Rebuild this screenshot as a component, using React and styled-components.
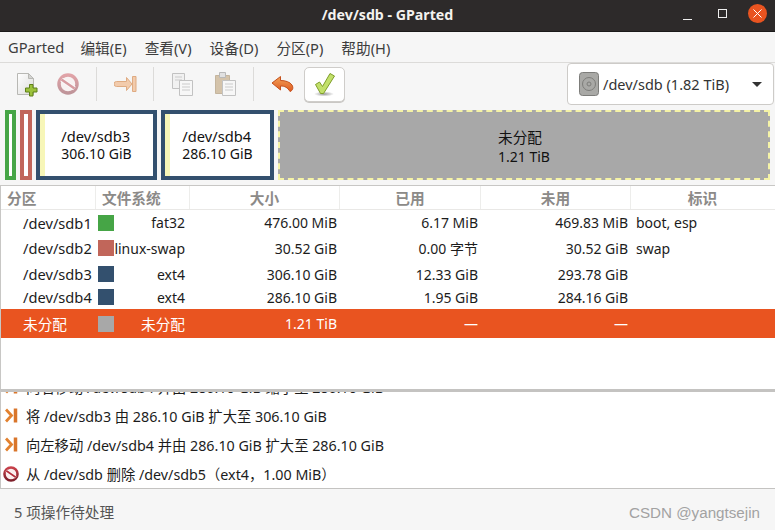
import React from "react";
import styled, { createGlobalStyle } from "styled-components";

const Global = createGlobalStyle`
  html, body { margin: 0; padding: 0; background: #f6f6f6; }
  body { font-family: "Noto Sans", "Noto Sans CJK SC", sans-serif; font-size: 14.67px; color: #1e1e1e; }
`;
const Win = styled.div`width:775px;height:530px;display:flex;flex-direction:column;overflow:hidden;background:#f6f6f6;position:relative;`;
const TitleBar = styled.div`padding-bottom:3px;height:28px;border-bottom:1px solid #1b1a1a;background:#2d2a2a;display:flex;align-items:center;justify-content:center;position:relative;color:#f4f2ef;font-weight:700;font-size:14.2px;`;
const WinCtl = styled.div`position:absolute;top:4px;right:8px;display:flex;align-items:center;height:19px;`;
const MinBox = styled.svg`width:9px;height:9px;margin-right:26px;margin-top:3px;`;
const MaxBox = styled.svg`width:9px;height:9px;margin-right:21px;`;
const Close = styled.span`width:19px;height:19px;border-radius:50%;background:#e95420;display:flex;align-items:center;justify-content:center;`;
const MenuBar = styled.div`height:30px;border-bottom:1px solid #dcdbd9;display:flex;align-items:center;padding-left:8px;gap:18px;color:#3d3d3d;`;
const MenuItem = styled.span`&:first-child{margin-right:-2px;}`;
const ToolBar = styled.div`height:42px;display:flex;align-items:center;padding-left:10px;position:relative;`;
const ToolBtn = styled.span`width:${p=>p.$w}px;height:35px;display:flex;align-items:center;justify-content:center;box-sizing:border-box;
  ${p=>p.$raised?"background:#fff;border:1px solid #cfcdca;border-radius:5px;box-shadow:0 1px 0 #c9c7c4;":""}`;
const Sep = styled.span`width:1px;height:34px;background:#dcdbd9;margin:0 6px 0 ${p=>p.$l}px;`;
const Combo = styled.div`position:absolute;right:1px;top:0;width:207px;height:42px;box-sizing:border-box;background:#fff;border:1px solid #cdcbc8;border-radius:4px;display:flex;align-items:center;padding-left:11px;font-size:14.5px;color:#333;gap:4px;`;
const Caret = styled.span`position:absolute;right:11px;top:18px;width:0;height:0;border-left:5px solid transparent;border-right:5px solid transparent;border-top:5px solid #333;`;
const PartBar = styled.div`height:70px;margin-top:5px;padding:0 5px;display:flex;gap:4px;box-sizing:border-box;`;
const Sliver = styled.div`width:${p=>p.$w}px;height:70px;box-sizing:border-box;border:4px solid ${p=>p.$c};background:#fff;`;
const Part = styled.div`width:${p=>p.$w}px;height:70px;box-sizing:border-box;border:4px solid #33506e;background:#fff;position:relative;display:flex;align-items:center;justify-content:center;line-height:18px;color:#111;
  &::before{content:"";position:absolute;left:0;top:0;bottom:0;width:5px;background:#f7f6b8;}`;
const PartText = styled.div`display:flex;flex-direction:column;`;
const SizeText = styled.span`font-size:14px;`;
const Unalloc = styled.div`flex:1;height:70px;box-sizing:border-box;border:2px dashed #f5f3a6;background:#a8a8a8;display:flex;align-items:center;justify-content:center;line-height:20px;color:#111;padding-top:4px;`;
const Table = styled.div`height:204px;margin-top:5px;background:#fff;border:1px solid #c8c7c5;border-right:none;border-bottom:none;box-sizing:border-box;color:#1c1c1c;`;
const Grid = "grid-template-columns:95px 94px 150px 141px 150px 143px;";
const Head = styled.div`display:grid;${Grid}height:24px;box-sizing:border-box;border-bottom:1px solid #e9e8e6;color:#8c8a88;font-weight:700;`;
const HCell = styled.div`border-right:1px solid #ededeb;display:flex;align-items:center;padding-bottom:1px;justify-content:${p=>p.$c?"center":"flex-start"};padding-left:${p=>p.$c?0:6}px;&:last-child{border:none;}`;
const Row = styled.div`display:grid;${Grid}height:${p=>p.$h}px;align-items:center;${p=>p.$sel?"background:#e95420;color:#fff;margin-top:2px;":""}`;
const Dev = styled.div`padding-left:22px;white-space:nowrap;`;
const FsCell = styled.div`display:flex;align-items:center;padding-left:2px;justify-content:space-between;padding-right:5px;white-space:nowrap;font-size:${p=>p.$cjk?14.67:14}px;`;
const Swatch = styled.span`width:16px;height:16px;background:${p=>p.$c};flex:none;`;
const Num = styled.div`text-align:right;padding-right:3px;white-space:nowrap;font-size:14px;`;
const Flag = styled.div`padding-left:5px;font-size:14px;`;
const LogPanel = styled.div`height:100px;border-top:3px solid #c4c3c1;border-bottom:1px solid #c4c3c1;border-left:1px solid #c8c7c5;background:#fff;box-sizing:border-box;overflow:hidden;display:flex;flex-direction:column;justify-content:flex-end;font-size:14.3px;color:#1c1c1c;`;
const LogRow = styled.div`height:29px;flex:none;display:flex;align-items:center;gap:7px;padding-left:2px;white-space:nowrap;`;
const LogIcon = styled.span`width:16px;display:flex;justify-content:center;flex:none;`;
const Status = styled.div`flex:1;display:flex;align-items:center;padding:3px 0 0 14px;color:#555;`;
const Watermark = styled.div`position:absolute;right:15px;bottom:9px;font:15.2px "Liberation Sans",sans-serif;color:#a2a2a2;`;

const NewIcon=()=> <svg width="22" height="25" viewBox="0 0 22 25"><defs><linearGradient id="pg" x1="0" y1="0" x2="1" y2="1"><stop offset="0" stopColor="#fff"/><stop offset="1" stopColor="#dcdcda"/></linearGradient></defs><path d="M1.500 1.500h11l5 5v16h-16z" fill="url(#pg)" stroke="#b8b8b4"/><path d="M12.500 1.500v5h5z" fill="#d4d4d2" stroke="#b8b8b4"/><path d="M13.500 12.500h3.500v3.500h4v4h-4v4h-3.500v-4h-4v-4h4z" fill="#9cc23c" stroke="#5f8018"/></svg>;
const DelIcon=({s=22,dim})=> <svg width={s} height={s} viewBox="0 0 22 22" opacity={dim?.45:1}><defs><linearGradient id="rg" x1="0" y1="0" x2="0" y2="1"><stop offset="0" stopColor="#c8404a"/><stop offset="1" stopColor="#7d1f2a"/></linearGradient></defs><circle cx="11" cy="11" r="9" fill="#fbeeee" stroke="url(#rg)" strokeWidth="3.500"/><path d="M4.500 6.500l13 9" stroke="#fff" strokeWidth="4.500"/><path d="M4.500 6.500l13 9" stroke="#b5303c" strokeWidth="2.500"/></svg>;
const ArrowIcon=()=> <svg width="23" height="18" viewBox="0 0 23 18" opacity=".6"><path d="M2.500 6.500h10V2.500l5.500 6.500-5.500 6.500v-4h-10a2.500 2.500 0 0 1 0-5z" fill="#f0b07c" stroke="#d07a36" strokeLinejoin="round"/><path d="M18.500 1.500h3.500v15h-3.500z" fill="#f0b07c" stroke="#d07a36"/></svg>;
const CopyIcon=()=> <svg width="21" height="23" viewBox="0 0 21 23" opacity=".55"><path d="M.5.500h12v15H.5z" fill="#eee" stroke="#999"/><path d="M3 4h7M3 7h7" stroke="#aaa"/><path d="M7.500 7.500h13v15h-13z" fill="#f8f8f8" stroke="#999"/><path d="M10 11h8M10 14h8M10 17h8" stroke="#aaa"/></svg>;
const PasteIcon=()=> <svg width="21" height="24" viewBox="0 0 21 24" opacity=".55"><path d="M.5 3.500h14v18H.5z" fill="#b99a6d" stroke="#9c8057"/><path d="M4.500.500h6v5h-6z" fill="#d0d0d0" stroke="#888"/><path d="M7.500 8.500h13v15h-13z" fill="#f8f8f8" stroke="#999"/><path d="M10 12h8M10 15h8M10 18h8" stroke="#aaa"/></svg>;
const UndoIcon=()=> <svg width="23" height="19" viewBox="0 0 23 19"><defs><linearGradient id="ug" x1="0" y1="0" x2="0" y2="1"><stop offset="0" stopColor="#f3a259"/><stop offset="1" stopColor="#dd5a20"/></linearGradient></defs><path d="M9.500 1.500L1 8l8.500 7v-4c4.500 0 7 1.500 9.500 5.500 3-1 3.500-4 2-6.500-2-3-6.500-4.500-11.500-4.500z" fill="url(#ug)" stroke="#c4501c" strokeLinejoin="round"/></svg>;
const CheckIcon=()=> <svg width="22" height="25" viewBox="0 0 22 25"><defs><radialGradient id="sh"><stop offset="0" stopColor="#999"/><stop offset="1" stopColor="#999" stopOpacity="0"/></radialGradient></defs><ellipse cx="10" cy="22" rx="10" ry="2.500" fill="url(#sh)"/><path d="M1.500 12.500l4-2.500 3 4.500L16 1.500l4.500 2.500L9.500 21.500h-3z" fill="#c2e06a" stroke="#7f9e2a" strokeLinejoin="round"/></svg>;
const DiskIcon=()=> <svg width="20" height="24" viewBox="0 0 20 24"><rect x=".5" y=".5" width="19" height="23" rx="3" fill="#a9a9a6" stroke="#7d7d7a"/><circle cx="10" cy="12" r="6.500" fill="none" stroke="#7d7d7a"/><circle cx="10" cy="12" r="2" fill="none" stroke="#7d7d7a"/></svg>;
const MoveIcon=()=> <svg width="13" height="15" viewBox="0 0 13 15"><path d="M1 1.500l5.500 6-5.500 6" fill="none" stroke="#e2812f" strokeWidth="2.800"/><path d="M10.500 .5v14" stroke="#d9752a" strokeWidth="3.500"/></svg>;

const rows=[
 {h:25,d:"/dev/sdb1",c:"#46a546",f:"fat32",s:"476.00 MiB",u:"6.17 MiB",n:"469.83 MiB",t:"boot, esp"},
 {h:26,d:"/dev/sdb2",c:"#c1665a",f:"linux-swap",s:"30.52 GiB",u:"0.00 字节",n:"30.52 GiB",t:"swap"},
 {h:26,d:"/dev/sdb3",c:"#33506e",f:"ext4",s:"306.10 GiB",u:"12.33 GiB",n:"293.78 GiB",t:""},
 {h:20,d:"/dev/sdb4",c:"#33506e",f:"ext4",s:"286.10 GiB",u:"1.95 GiB",n:"284.16 GiB",t:""},
 {h:29,d:"未分配",c:"#a8a8a8",f:"未分配",s:"1.21 TiB",u:"—",n:"—",t:"",sel:true},
];

export default function App(){
 return <Win><Global/>
  <TitleBar>/dev/sdb - GParted
   <WinCtl>
    <MinBox viewBox="0 0 9 9"><path d="M0 8.500h9" stroke="#eee"/></MinBox>
    <MaxBox viewBox="0 0 9 9"><rect x=".5" y=".5" width="8" height="8" fill="none" stroke="#eee"/></MaxBox>
    <Close><svg width="9" height="9" viewBox="0 0 9 9"><path d="M.5.500l8 8M8.500.500l-8 8" stroke="#fff"/></svg></Close>
   </WinCtl>
  </TitleBar>
  <MenuBar>{["GParted","编辑(E)","查看(V)","设备(D)","分区(P)","帮助(H)"].map(m=><MenuItem key={m}>{m}</MenuItem>)}</MenuBar>
  <ToolBar>
   <ToolBtn $w={33}><NewIcon/></ToolBtn><ToolBtn $w={50}><DelIcon dim/></ToolBtn>
   <Sep $l={3}/><ToolBtn $w={44}><ArrowIcon/></ToolBtn><Sep $l={6}/>
   <ToolBtn $w={44}><CopyIcon/></ToolBtn><ToolBtn $w={42}><PasteIcon/></ToolBtn><Sep $l={7}/>
   <ToolBtn $w={44}><UndoIcon/></ToolBtn><ToolBtn $w={41} $raised><CheckIcon/></ToolBtn>
   <Combo><DiskIcon/>/dev/sdb (1.82 TiB)<Caret/></Combo>
  </ToolBar>
  <PartBar>
   <Sliver $w={11} $c="#46a546"/><Sliver $w={12} $c="#c1665a"/>
   <Part $w={121}><PartText><span>/dev/sdb3</span><SizeText>306.10 GiB</SizeText></PartText></Part>
   <Part $w={113}><PartText><span>/dev/sdb4</span><SizeText>286.10 GiB</SizeText></PartText></Part>
   <Unalloc><PartText><span>未分配</span><SizeText>1.21 TiB</SizeText></PartText></Unalloc>
  </PartBar>
  <Table>
   <Head>{["分区","文件系统","大小","已用","未用","标识"].map((h,i)=><HCell key={h} $c={i>1}>{h}</HCell>)}</Head>
   {rows.map(r=><Row key={r.d} $h={r.h} $sel={r.sel}>
     <Dev>{r.d}</Dev><FsCell $cjk={r.sel}><Swatch $c={r.c}/><span>{r.f}</span></FsCell>
     <Num>{r.s}</Num><Num>{r.u}</Num><Num>{r.n}</Num><Flag>{r.t}</Flag></Row>)}
  </Table>
  <LogPanel>
   <LogRow><LogIcon><MoveIcon/></LogIcon>向右移动 /dev/sdb4 并由 286.10 GiB 缩小至 286.10 GiB</LogRow>
   <LogRow><LogIcon><MoveIcon/></LogIcon>将 /dev/sdb3 由 286.10 GiB 扩大至 306.10 GiB</LogRow>
   <LogRow><LogIcon><MoveIcon/></LogIcon>向左移动 /dev/sdb4 并由 286.10 GiB 扩大至 286.10 GiB</LogRow>
   <LogRow><LogIcon><DelIcon s={16}/></LogIcon>从 /dev/sdb 删除 /dev/sdb5（ext4，1.00 MiB）</LogRow>
  </LogPanel>
  <Status>5 项操作待处理</Status>
  <Watermark>CSDN @yangtsejin</Watermark>
 </Win>;
}
